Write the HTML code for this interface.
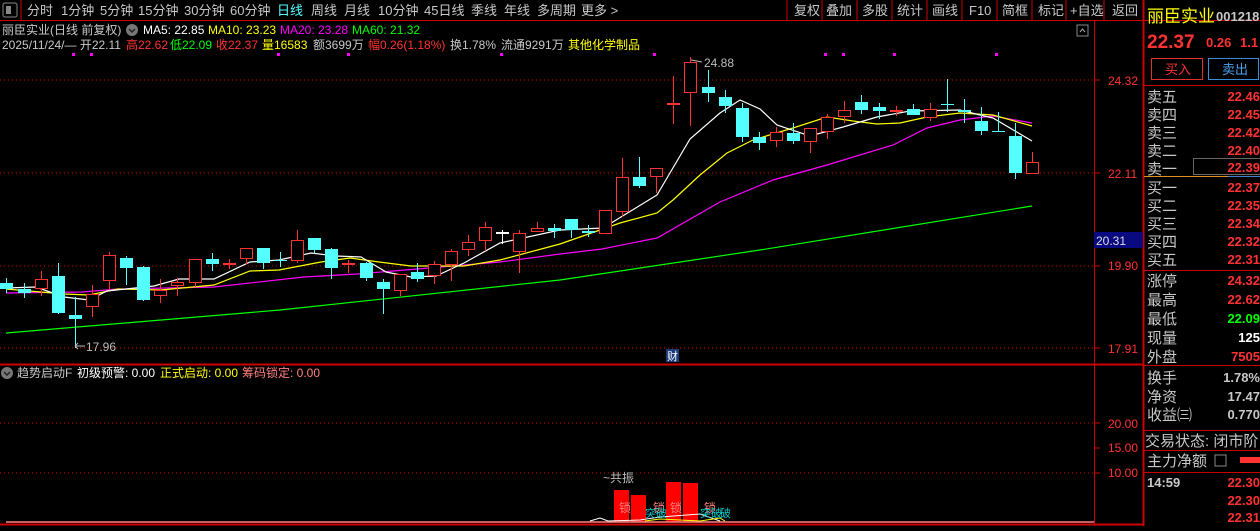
<!DOCTYPE html><html><head><meta charset="utf-8"><style>
body{margin:0;background:#000;width:1260px;height:526px;overflow:hidden;font-family:"Liberation Sans","Noto Sans CJK SC",sans-serif;}
svg text{font-family:"Liberation Sans","Noto Sans CJK SC",sans-serif;}
</style></head><body>
<svg id="s" width="1260" height="526" xmlns="http://www.w3.org/2000/svg">
<rect width="1260" height="526" fill="#000"/>
<!-- toolbar -->
<rect x="3" y="3" width="14" height="14" fill="none" stroke="#888" rx="2"/><rect x="6" y="6" width="5" height="8" fill="#888"/>
<line x1="21" y1="0" x2="21" y2="20" stroke="#c00"/>
<g font-size="13" fill="#c8c8c8">
<text x="27" y="15">分时</text><text x="61" y="15">1分钟</text><text x="100" y="15">5分钟</text><text x="138" y="15">15分钟</text><text x="184" y="15">30分钟</text><text x="230" y="15">60分钟</text>
<text x="277" y="15" fill="#55ffff">日线</text><text x="311" y="15">周线</text><text x="344" y="15">月线</text><text x="378" y="15">10分钟</text><text x="424" y="15">45日线</text><text x="471" y="15">季线</text><text x="504" y="15">年线</text><text x="537" y="15">多周期</text><text x="581" y="15">更多 &gt;</text>
<text x="794" y="15">复权</text><text x="826" y="15">叠加</text><text x="862" y="15">多股</text><text x="897" y="15">统计</text><text x="932" y="15">画线</text><text x="969" y="15">F10</text><text x="1002" y="15">简框</text><text x="1038" y="15">标记</text><text x="1070" y="15">+自选</text><text x="1112" y="15">返回</text>
</g>
<g stroke="#c00"><line x1="787" y1="0" x2="787" y2="20"/><line x1="822" y1="0" x2="822" y2="20"/><line x1="857" y1="0" x2="857" y2="20"/><line x1="892" y1="0" x2="892" y2="20"/><line x1="927" y1="0" x2="927" y2="20"/><line x1="962" y1="0" x2="962" y2="20"/><line x1="997" y1="0" x2="997" y2="20"/><line x1="1032" y1="0" x2="1032" y2="20"/><line x1="1066" y1="0" x2="1066" y2="20"/><line x1="1104" y1="0" x2="1104" y2="20"/><line x1="1143" y1="0" x2="1143" y2="20"/></g>
<line x1="0" y1="20.5" x2="1260" y2="20.5" stroke="#c00"/>
<!-- header -->
<g font-size="12">
<text x="2" y="34" fill="#c8c8c8">丽臣实业(日线 前复权)</text>
<circle cx="132" cy="30" r="6" fill="#777"/><path d="M129 29 L132 32 L135 29" stroke="#222" fill="none" stroke-width="1.5"/>
<text x="143" y="34" fill="#fff">MA5: 22.85</text><text x="208" y="34" fill="#ff0">MA10: 23.23</text><text x="280" y="34" fill="#f0f">MA20: 23.28</text><text x="352" y="34" fill="#0f0">MA60: 21.32</text>
<text x="2" y="49" fill="#c8c8c8">2025/11/24/— 开22.11</text><text x="126" y="49" fill="#ff3232">高22.62</text><text x="170" y="49" fill="#0f0">低22.09</text><text x="216" y="49" fill="#ff3232">收22.37</text><text x="262" y="49" fill="#ff0">量16583</text><text x="313" y="49" fill="#c8c8c8">额3699万</text><text x="368" y="49" fill="#ff3232">幅0.26(1.18%)</text><text x="450" y="49" fill="#c8c8c8">换1.78%</text><text x="501" y="49" fill="#c8c8c8">流通9291万</text><text x="568" y="49" fill="#ff0">其他化学制品</text>
</g>
<rect x="1077" y="25" width="11" height="11" fill="none" stroke="#888"/><path d="M1080 32 L1082.5 29 L1085 32" stroke="#aaa" fill="none"/>
<!-- grid -->
<g stroke="#c00" stroke-dasharray="1,3"><line x1="0" y1="80" x2="1094" y2="80"/><line x1="0" y1="173" x2="1094" y2="173"/><line x1="0" y1="266" x2="1094" y2="266"/><line x1="0" y1="348" x2="1094" y2="348"/><line x1="0" y1="423" x2="1094" y2="423"/><line x1="0" y1="473" x2="1094" y2="473"/></g>
<line x1="1094.5" y1="20" x2="1094.5" y2="526" stroke="#c00"/>
<line x1="1143.5" y1="0" x2="1143.5" y2="526" stroke="#c00" stroke-width="2"/>
<line x1="0" y1="364.5" x2="1144" y2="364.5" stroke="#c00" stroke-width="2"/>
<line x1="0" y1="524.5" x2="1144" y2="524.5" stroke="#c00" stroke-width="2"/>
<g stroke="#c00"><line x1="1094" y1="80" x2="1100" y2="80"/><line x1="1094" y1="173" x2="1100" y2="173"/><line x1="1094" y1="266" x2="1100" y2="266"/><line x1="1094" y1="348" x2="1100" y2="348"/><line x1="1094" y1="423" x2="1100" y2="423"/><line x1="1094" y1="448" x2="1100" y2="448"/><line x1="1094" y1="473" x2="1100" y2="473"/></g>
<g font-size="12" fill="#ff3232"><text x="1108" y="85">24.32</text><text x="1108" y="178">22.11</text><text x="1108" y="270">19.90</text><text x="1108" y="353">17.91</text><text x="1108" y="428">20.00</text><text x="1108" y="452">15.00</text><text x="1108" y="477">10.00</text></g>
<rect x="1094" y="232" width="49" height="16" fill="#0a0a80"/><text x="1096" y="245" font-size="12" fill="#ddd">20.31</text>
<g id="ch"></g>
<g fill="#f0f"><rect x="72" y="53" width="3" height="3"/><rect x="90" y="53" width="3" height="3"/><rect x="277" y="53" width="3" height="3"/><rect x="347" y="53" width="3" height="3"/><rect x="500" y="53" width="3" height="3"/><rect x="653" y="53" width="3" height="3"/><rect x="824" y="53" width="3" height="3"/><rect x="842" y="53" width="3" height="3"/><rect x="893" y="53" width="3" height="3"/><rect x="995" y="53" width="3" height="3"/></g>
<text x="704" y="67" font-size="12" fill="#bbb">24.88</text><path d="M691 60 L702 62" stroke="#bbb"/>
<text x="86" y="351" font-size="12" fill="#bbb">17.96</text><path d="M75 346 L85 346 M75 346 L78 343 M75 346 L78 349" stroke="#bbb" fill="none"/>
<rect x="666" y="349" width="13" height="13" fill="#1a3a7a"/><text x="667" y="360" font-size="11" fill="#fff">财</text>
<!-- indicator -->
<g font-size="12"><circle cx="7" cy="373" r="6" fill="#777"/><path d="M4 372 L7 375 L10 372" stroke="#222" fill="none" stroke-width="1.5"/>
<text x="17" y="377" fill="#c8c8c8">趋势启动F</text><text x="77" y="377" fill="#fff">初级预警: 0.00</text><text x="160" y="377" fill="#ff0">正式启动: 0.00</text><text x="242" y="377" fill="#ff8080">筹码锁定: 0.00</text></g>
<g fill="#f00"><rect x="614" y="490" width="15" height="32"/><rect x="631" y="495" width="15" height="27"/><rect x="666" y="482" width="15" height="40"/><rect x="683" y="483" width="15" height="39"/></g>
<line x1="6" y1="522" x2="1094" y2="522" stroke="#ff8080" stroke-width="1.5"/>
<path d="M590 521 L600 518 L608 521 L640 520 L660 517 L700 514 L720 521" stroke="#fff" fill="none"/>
<path d="M645 521 L660 519 L700 521 L720 518 L725 521" stroke="#ff0" fill="none"/>
<text x="603" y="482" font-size="12" fill="#bbb">~共振</text>
<g font-size="12" fill="#ff8080"><text x="619" y="512">锁</text><text x="653" y="512">锁</text><text x="670" y="512">锁</text><text x="704" y="512">锁</text></g>
<g font-size="11" fill="#0cc"><text x="645" y="517">突破</text><text x="700" y="517">突破</text><text x="720" y="517">破</text></g>
<!-- right panel -->
<text x="1147" y="22" font-size="17" fill="#ff0">丽臣实业</text><text x="1216" y="21" font-size="13" fill="#c8c8c8" font-weight="bold">001218</text>
<text x="1147" y="48" font-size="19" fill="#ff3232" font-weight="bold">22.37</text><text x="1206" y="47" font-size="13" fill="#ff3232" font-weight="bold">0.26</text><text x="1240" y="47" font-size="13" fill="#ff3232" font-weight="bold">1.1</text>
<rect x="1151.5" y="58.5" width="51" height="21" fill="none" stroke="#e03030"/><text x="1165" y="74" font-size="13" fill="#ff3232">买入</text>
<rect x="1208.5" y="58.5" width="50" height="21" fill="none" stroke="#3c8cdc"/><text x="1222" y="74" font-size="13" fill="#4aa0f0">卖出</text>
<g stroke="#c00"><line x1="1144" y1="85.5" x2="1260" y2="85.5"/><line x1="1144" y1="270.5" x2="1260" y2="270.5"/><line x1="1144" y1="365.5" x2="1260" y2="365.5"/><line x1="1144" y1="430.5" x2="1260" y2="430.5"/><line x1="1144" y1="450.5" x2="1260" y2="450.5"/><line x1="1144" y1="472.5" x2="1260" y2="472.5"/></g>
<line x1="1144" y1="176.5" x2="1228" y2="176.5" stroke="#e09020"/><line x1="1228" y1="176.5" x2="1260" y2="176.5" stroke="#4080d0"/>
<rect x="1193.5" y="158.5" width="70" height="16" fill="none" stroke="#666"/>
<g font-size="15" fill="#c8c8c8">
<text x="1147" y="102">卖五</text><text x="1147" y="120">卖四</text><text x="1147" y="138">卖三</text><text x="1147" y="156">卖二</text><text x="1147" y="174">卖一</text>
<text x="1147" y="193">买一</text><text x="1147" y="211">买二</text><text x="1147" y="229">买三</text><text x="1147" y="247">买四</text><text x="1147" y="265">买五</text>
<text x="1147" y="286">涨停</text><text x="1147" y="305">最高</text><text x="1147" y="324">最低</text><text x="1147" y="343">现量</text><text x="1147" y="362">外盘</text>
<text x="1147" y="383">换手</text><text x="1147" y="402">净资</text><text x="1147" y="420">收益㈢</text>
<text x="1145" y="446">交易状态: 闭市阶</text><text x="1147" y="466">主力净额</text>
</g>
<rect x="1215" y="455" width="11" height="11" fill="none" stroke="#888"/><rect x="1240" y="457" width="20" height="6" fill="#ff3232"/>
<g font-size="13" fill="#ff3232" font-weight="bold" text-anchor="end">
<text x="1260" y="101">22.46</text><text x="1260" y="119">22.45</text><text x="1260" y="137">22.42</text><text x="1260" y="155">22.40</text><text x="1260" y="172">22.39</text>
<text x="1260" y="192">22.37</text><text x="1260" y="210">22.35</text><text x="1260" y="228">22.34</text><text x="1260" y="246">22.32</text><text x="1260" y="264">22.31</text>
<text x="1260" y="285">24.32</text><text x="1260" y="304">22.62</text><text x="1260" y="323" fill="#0f0">22.09</text><text x="1260" y="342" fill="#fff">125</text><text x="1260" y="361">7505</text>
<text x="1260" y="382" fill="#c8c8c8">1.78%</text><text x="1260" y="401" fill="#c8c8c8">17.47</text><text x="1260" y="419" fill="#c8c8c8">0.770</text>
<text x="1260" y="487">22.30</text><text x="1260" y="505">22.30</text><text x="1260" y="522">22.31</text>
</g>
<text x="1147" y="487" font-size="13" fill="#c8c8c8" font-weight="bold">14:59</text>
</svg>
<script>
var C=[[0,283,289,278,293],[0,289,293,283,298],[1,279,289,271,296],[0,276,313,263,314],[0,315,319,297,348],[1,294,307,285,317],[1,255,281,252,290],[0,258,268,256,285],[0,267,300,266,301],[1,290,296,279,303],[1,282,286,278,296],[1,259,283,259,287],[0,259,264,253,271],[1,263,264,259,269],[1,248,259,248,264],[0,248,263,248,269],[0,260,261,252,267],[1,240,261,230,263],[0,238,250,238,253],[0,249,268,248,279],[1,263,265,260,273],[0,263,278,262,281],[0,282,289,279,314],[1,274,291,274,296],[0,272,279,263,282],[1,264,276,261,284],[1,251,265,249,281],[1,242,250,235,256],[1,227,241,222,251],[2,232,233,230,244],[1,233,252,230,273],[1,228,232,222,232],[0,228,231,224,238],[0,219,230,219,238],[0,231,233,225,237],[1,210,234,210,234],[1,177,212,158,217],[0,177,186,157,188],[1,168,177,168,193],[1,103,104,76,124],[1,62,93,57,126],[0,87,93,70,102],[0,97,106,90,113],[0,108,137,103,142],[0,137,143,132,150],[1,132,141,127,147],[0,133,141,123,144],[1,128,142,128,153],[1,117,132,114,139],[1,110,117,101,123],[0,102,110,95,114],[0,107,111,103,119],[1,110,112,106,116],[0,109,115,104,115],[1,109,118,103,121],[0,104,105,79,112],[0,110,112,99,123],[0,121,131,107,135],[0,131,132,112,132],[0,136,173,123,179],[1,162,174,152,174]];
var h='';
function pl(p,c){h+='<polyline fill="none" stroke="'+c+'" stroke-width="1.2" points="'+p+'"/>';}
pl("6,333 280,310 560,280 760,250 1032,206","#0f0");
pl("6,293 82,292 118,289 214,287 304,277 357,274 429,268 500,262 560,254 602,249 657,238 720,202 773,180 827,165 893,145 927,128 960,120 993,116 1032,123","#f0f");
pl("6,289 64,294 89,295 118,289 161,290 214,285 250,271 279,270 321,262 350,258 379,262 411,266 464,266 500,260 560,244 620,223 657,213 673,200 700,175 727,153 753,140 793,128 827,117 853,121 877,124 900,123 927,117 960,113 993,115 1032,126","#ff0");
pl("6,288 36,287 64,297 89,300 107,291 154,286 179,279 214,279 250,262 279,260 311,253 336,256 361,257 386,272 411,277 436,276 464,263 500,243 560,230 603,228 657,195 690,139 720,113 740,100 760,109 777,125 810,136 843,127 877,117 910,111 960,110 980,115 993,118 1032,141","#fff");
C.forEach(function(c,i){var x=Math.round(6.4+i*17.1);var col=c[0]==1?'#ff3232':(c[0]==2?'#fff':'#54ffff');
h+='<line x1="'+(x+.5)+'" y1="'+c[3]+'" x2="'+(x+.5)+'" y2="'+c[4]+'" stroke="'+col+'"/>';
var bh=Math.max(c[2]-c[1],1);
if(c[0]==0) h+='<rect x="'+(x-6)+'" y="'+c[1]+'" width="13" height="'+bh+'" fill="'+col+'"/>';
else if(bh<=2) h+='<rect x="'+(x-6)+'" y="'+c[1]+'" width="13" height="2" fill="'+col+'"/>';
else h+='<rect x="'+(x-5.5)+'" y="'+(c[1]+.5)+'" width="12" height="'+(bh-1)+'" fill="#000" stroke="'+col+'"/>';});
document.getElementById('ch').innerHTML=h;
</script>
</body></html>
